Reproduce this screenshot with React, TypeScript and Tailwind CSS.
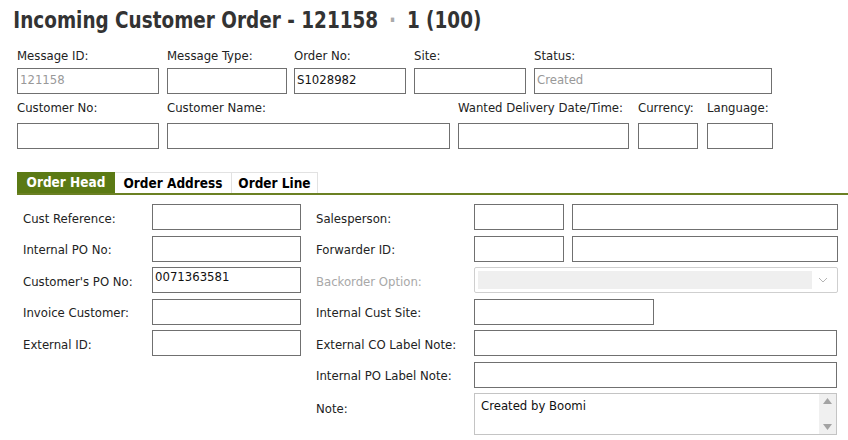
import type { ReactNode } from 'react';

const body = { fontFamily: '"DejaVu Sans Condensed", "DejaVu Sans", Tahoma, sans-serif' };

function Box({ w, value, muted }: { w: string; value?: string; muted?: boolean }) {
  return (
    <div
      className={`${w} h-[26px] border border-[#707070] bg-white px-[2px] text-[13px] leading-[22px] ${
        muted ? 'text-[#999]' : 'text-[#111]'
      }`}
    >
      {value}
    </div>
  );
}

function TopField({ label, w, value, muted }: { label: string; w: string; value?: string; muted?: boolean }) {
  return (
    <div className="flex flex-col">
      <span className="whitespace-nowrap text-[13px] leading-[18px] text-[#222]">{label}</span>
      <Box w={w} value={value} muted={muted} />
    </div>
  );
}

function Label({ children, disabled, top }: { children: ReactNode; disabled?: boolean; top?: boolean }) {
  return (
    <span
      className={`flex text-[13px] ${top ? 'items-start pt-[6px]' : 'items-center pt-[3px]'} ${
        disabled ? 'text-[#a8a8a8]' : 'text-[#222]'
      }`}
    >
      {children}
    </span>
  );
}

export default function App() {
  return (
    <div className="h-[440px] w-[848px] overflow-hidden bg-white" style={body}>
      <h1
        className="origin-left scale-x-[0.89] whitespace-nowrap pl-[15px] pt-[4px] text-[23px] font-bold leading-[32px] text-[#333]"
        style={{ fontFamily: '"DejaVu Sans Condensed", "DejaVu Sans", sans-serif' }}
      >
        Incoming Customer Order - 121158 <span className="mx-[5px] text-[#aaa]">·</span> 1 (100)
      </h1>

      <div className="mt-[11px] flex pl-[17px] [&>div>div>span]:h-[21px]">
        <div className="flex gap-[8px]">
          <TopField label="Message ID:" w="w-[142px]" value="121158" muted />
          <TopField label="Message Type:" w="w-[120px]" />
        </div>
        <div className="ml-[7px] flex gap-[8px]">
          <TopField label="Order No:" w="w-[112px]" value="S1028982" />
          <TopField label="Site:" w="w-[112px]" />
          <TopField label="Status:" w="w-[238px]" value="Created" muted />
        </div>
      </div>

      <div className="mt-[5px] flex gap-[8px] pl-[17px] [&_span]:h-[24px]">
        <TopField label="Customer No:" w="w-[142px]" />
        <TopField label="Customer Name:" w="w-[283px]" />
        <TopField label="Wanted Delivery Date/Time:" w="w-[171px]" />
        <div className="ml-[1px] flex gap-[9px]">
          <TopField label="Currency:" w="w-[60px]" />
          <TopField label="Language:" w="w-[66px]" />
        </div>
      </div>

      <div className="mt-[23px] ml-[17px] flex border-b-2 border-[#6b8023]">
        <div className="flex h-[21px] w-[98px] items-center justify-center bg-[#5b7a14] text-[13.5px] font-bold text-white">
          Order Head
        </div>
        <div className="flex h-[21px] w-[117px] items-center justify-center border-r border-t border-[#e2e2e2] text-[13.5px] font-bold text-black">
          Order Address
        </div>
        <div className="flex h-[21px] w-[86px] items-center justify-center border-r border-t border-[#e2e2e2] text-[13.5px] font-bold text-black">
          Order Line
        </div>
      </div>

      <div className="mt-[9px] flex pl-[23px]">
        <div className="grid grid-cols-[129px_149px] content-start gap-y-[5.5px]">
          <Label>Cust Reference:</Label>
          <Box w="w-[149px]" />
          <Label>Internal PO No:</Label>
          <Box w="w-[149px]" />
          <Label>Customer's PO No:</Label>
          <div className="h-[26px] w-[149px] border border-[#707070] px-[2px] text-[13px] leading-[18px] text-[#111]">
            0071363581
          </div>
          <Label>Invoice Customer:</Label>
          <Box w="w-[149px]" />
          <Label>External ID:</Label>
          <Box w="w-[149px]" />
        </div>

        <div className="ml-[15px] grid grid-cols-[158px_364px] content-start gap-y-[5.5px]">
          <Label>Salesperson:</Label>
          <div className="flex gap-[8px]">
            <Box w="w-[90px]" />
            <Box w="w-[266px]" />
          </div>
          <Label>Forwarder ID:</Label>
          <div className="flex gap-[8px]">
            <Box w="w-[90px]" />
            <Box w="w-[266px]" />
          </div>
          <Label disabled>Backorder Option:</Label>
          <div className="flex h-[26px] w-[364px] items-center rounded-[2px] border border-[#cfcfcf] bg-white p-[3px]">
            <div className="h-full flex-1 bg-[#efefef]" />
            <svg className="mx-[6px]" width="10" height="6" viewBox="0 0 10 6" fill="none">
              <path d="M1 1l4 4 4-4" stroke="#b5b5b5" strokeWidth="1" />
            </svg>
          </div>
          <Label>Internal Cust Site:</Label>
          <Box w="w-[180px]" />
          <Label>External CO Label Note:</Label>
          <Box w="w-[363px]" />
          <Label>Internal PO Label Note:</Label>
          <Box w="w-[363px]" />
          <Label top>Note:</Label>
          <div className="flex h-[42px] w-[363px] border border-[#c4c4c4] bg-white">
            <div className="flex-1 px-[6px] pt-[3px] text-[13px] leading-[18px] text-[#111]">Created by Boomi</div>
            <div className="flex w-[17px] flex-col items-center justify-between bg-[#f0f0f0] py-[4px]">
              <svg width="9" height="6" viewBox="0 0 9 6">
                <path d="M0 6L4.5 0 9 6z" fill="#a3a3a3" />
              </svg>
              <svg width="9" height="6" viewBox="0 0 9 6">
                <path d="M0 0L4.5 6 9 0z" fill="#a3a3a3" />
              </svg>
            </div>
          </div>
        </div>
      </div>
    </div>
  );
}
